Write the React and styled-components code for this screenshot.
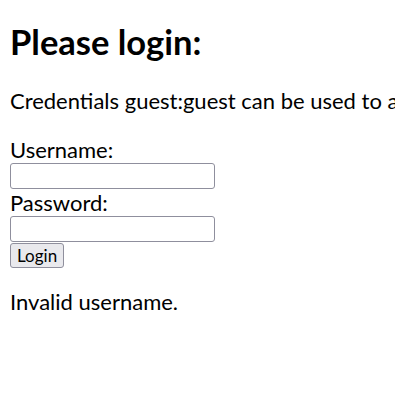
import React from "react";
import styled, { createGlobalStyle } from "styled-components";

const Global = createGlobalStyle`
  html, body {
    overflow: hidden;
  }
  body {
    margin: 10px;
    font-family: "Segoe UI", "Lato", "Noto Sans", sans-serif;
    font-size: 22px;
    line-height: 26.5px;
    color: #000;
    background: #fff;
  }
`;

const Title = styled.h1`
  font-size: 34.5px;
  line-height: 42px;
  font-weight: 700;
  margin: 11px 0 25px;
`;

const Note = styled.p`
  white-space: nowrap;
  margin: 0 0 22px;
`;

const Form = styled.form`
  margin: 0;
`;

const Field = styled.input`
  width: 205px;
  height: 26px;
  box-sizing: border-box;
  border: 1px solid #8f8f9d;
  border-radius: 3px;
  font-size: 16px;
  padding: 1px 2px;
  margin: 0;
  vertical-align: top;
`;

const Button = styled.button`
  font-family: "Segoe UI", "Lato", "Noto Sans", sans-serif;
  font-size: 17px;
  height: 25px;
  padding: 0 6px;
  background: #e9e9ed;
  border: 1px solid #8f8f9d;
  border-radius: 3px;
  color: #000;
  vertical-align: top;
`;

const Message = styled.p`
  margin: 20px 0;
`;

export default function App() {
  return (
    <>
      <Global />
      <Title>Please login:</Title>
      <Note>Credentials guest:guest can be used to access the application.</Note>
      <Form onSubmit={(e) => e.preventDefault()}>
        <label>Username:</label>
        <br />
        <Field type="text" name="username" />
        <br />
        <label>Password:</label>
        <br />
        <Field type="password" name="password" />
        <br />
        <Button type="submit">Login</Button>
      </Form>
      <Message>Invalid username.</Message>
    </>
  );
}
